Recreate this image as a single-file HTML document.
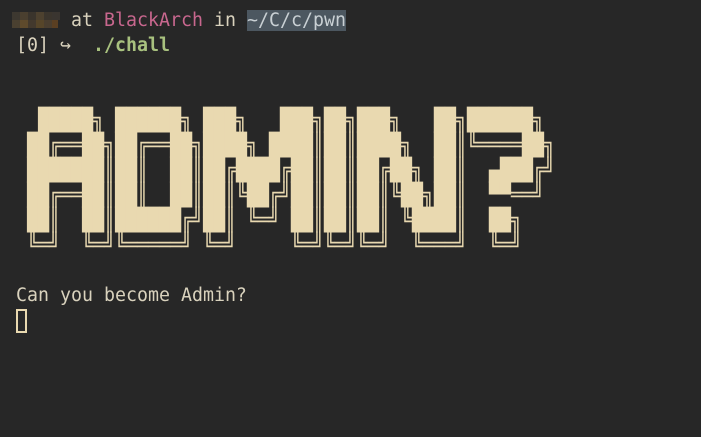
<!DOCTYPE html>
<html><head><meta charset="utf-8"><style>
html,body{margin:0;padding:0;background:#272727;width:701px;height:437px;overflow:hidden}
.t{position:absolute;left:16px;font-family:"DejaVu Sans Mono","Liberation Mono",monospace;font-size:18.27px;line-height:25px;color:#d9d2bd;white-space:pre}
.art{position:absolute;left:16px;top:108px;font-family:"DejaVu Sans Mono",monospace;font-size:18.27px;line-height:21px;color:#e9d9b0;white-space:pre;transform:scaleY(1.1905);transform-origin:0 0}
.pk{color:#c8678e}.gr{color:#a9c27f;font-weight:bold}
.hl{background:#4c5760;color:#c9d0d4}
.px{position:absolute;width:8px;height:8px}
</style></head><body>
<div class="px" style="left:12px;top:12px;background:#3d3830"></div>
<div class="px" style="left:20px;top:12px;background:#4a3f2f"></div>
<div class="px" style="left:28px;top:12px;background:#3a342c"></div>
<div class="px" style="left:36px;top:12px;background:#4d412f"></div>
<div class="px" style="left:44px;top:12px;background:#3b352d"></div>
<div class="px" style="left:52px;top:12px;background:#3a3530"></div>
<div class="px" style="left:12px;top:20px;background:#4a4030"></div>
<div class="px" style="left:20px;top:20px;background:#5e4a2c"></div>
<div class="px" style="left:28px;top:20px;background:#43392d"></div>
<div class="px" style="left:36px;top:20px;background:#564529"></div>
<div class="px" style="left:44px;top:20px;background:#4a3e2f"></div>
<div class="px" style="left:52px;top:20px;background:#5a3f22;width:6px"></div>
<div class="t" style="top:8px">     at <span class="pk">BlackArch</span> in <span class="hl">~/C/c/pwn</span></div>
<div class="t" style="top:33px">[0] ↪  <span class="gr">./chall</span></div>
<div class="art">  █████╗ ██████╗ ███╗   ███╗██╗███╗   ██╗██████╗ 
 ██╔══██╗██╔══██╗████╗ ████║██║████╗  ██║╚════██╗
 ███████║██║  ██║██╔████╔██║██║██╔██╗ ██║  ▄███╔╝
 ██╔══██║██║  ██║██║╚██╔╝██║██║██║╚██╗██║  ▀▀══╝ 
 ██║  ██║██████╔╝██║ ╚═╝ ██║██║██║ ╚████║  ██╗   
 ╚═╝  ╚═╝╚═════╝ ╚═╝     ╚═╝╚═╝╚═╝  ╚═══╝  ╚═╝   </div>
<div class="t" style="top:283px">Can you become Admin?</div>
<div style="position:absolute;left:16px;top:309px;width:7px;height:20px;border:2px solid #e9d9b0"></div>
</body></html>
